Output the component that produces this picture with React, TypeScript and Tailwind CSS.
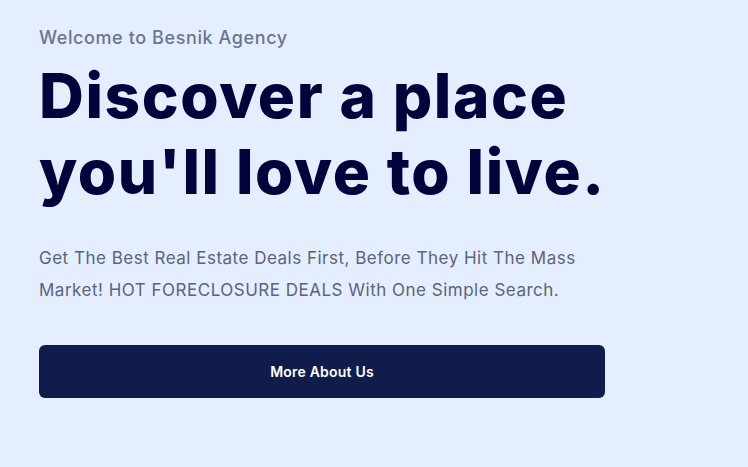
const App = () => {
  return (
    <section className="min-h-screen w-full bg-[#e4eefe] font-['Inter',sans-serif]">
      <div className="pl-[39px] pt-[24px] w-[605px]">
        {/* Eyebrow */}
        <p className="text-[18px] leading-[28px] font-medium tracking-[0.6px] text-[#6b7490]">
          Welcome to Besnik Agency
        </p>

        {/* Headline */}
        <h1 className="mt-[6px] whitespace-nowrap text-[62px] leading-[76px] font-extrabold tracking-[1.6px] text-[#02033a]">
          Discover a place
          <br />
          you'll love to live.
        </h1>

        {/* Description */}
        <p className="mt-[32px] whitespace-nowrap text-[17px] leading-[32px] tracking-[0.5px] text-[#5c6478]">
          Get The Best Real Estate Deals First, Before They Hit The Mass
          <br />
          Market! HOT FORECLOSURE DEALS With One Simple Search.
        </p>

        {/* CTA */}
        <button className="mt-[39px] w-[566px] h-[53px] rounded-[6px] bg-[#101c4c] text-white text-[14px] font-semibold tracking-[0.2px]">
          More About Us
        </button>
      </div>
    </section>
  );
};

export default App;
